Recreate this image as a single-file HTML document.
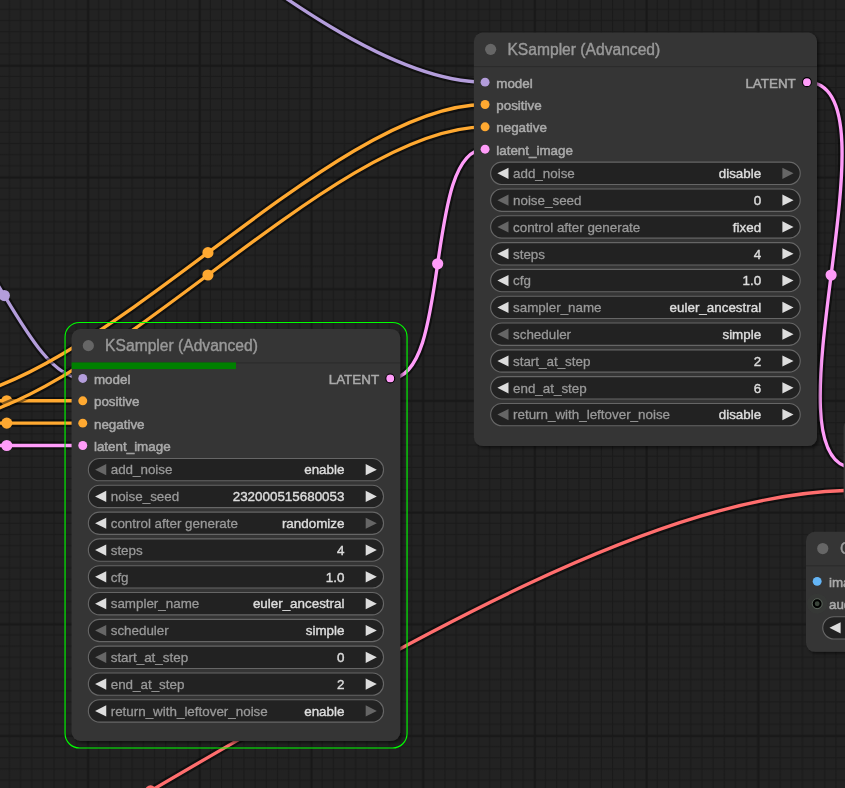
<!DOCTYPE html>
<html><head><meta charset="utf-8"><title>ComfyUI</title>
<style>html,body{margin:0;padding:0;background:#222222;overflow:hidden}svg{display:block;will-change:transform}text{font-family:"Liberation Sans",Arial,sans-serif;stroke-width:0.4px}.sl{stroke-width:0.5px}.wl{stroke-width:0.28px}</style></head><body>
<svg width="845" height="788" viewBox="0 0 845 788">
<defs><linearGradient id="mv" x1="0" x2="1" y1="0" y2="0"><stop offset="0" stop-color="#1a1a1a" stop-opacity="0"/><stop offset="0.5" stop-color="#1a1a1a" stop-opacity="1"/><stop offset="1" stop-color="#1a1a1a" stop-opacity="0"/></linearGradient><linearGradient id="mh" x1="0" x2="0" y1="0" y2="1"><stop offset="0" stop-color="#1a1a1a" stop-opacity="0"/><stop offset="0.5" stop-color="#1a1a1a" stop-opacity="1"/><stop offset="1" stop-color="#1a1a1a" stop-opacity="0"/></linearGradient><linearGradient id="Mv" x1="0" x2="1" y1="0" y2="0"><stop offset="0" stop-color="#181818" stop-opacity="0"/><stop offset="0.3333" stop-color="#181818" stop-opacity="1"/><stop offset="0.6667" stop-color="#181818" stop-opacity="1"/><stop offset="1" stop-color="#181818" stop-opacity="0"/></linearGradient><linearGradient id="Mh" x1="0" x2="0" y1="0" y2="1"><stop offset="0" stop-color="#181818" stop-opacity="0"/><stop offset="0.3333" stop-color="#181818" stop-opacity="1"/><stop offset="0.6667" stop-color="#181818" stop-opacity="1"/><stop offset="1" stop-color="#181818" stop-opacity="0"/></linearGradient><pattern id="grid" x="-30.3" y="-52.59" width="111.7" height="111.7" patternUnits="userSpaceOnUse"><rect width="111.7" height="111.7" fill="#222222"/><rect x="16.2" y="0" width="2.23" height="111.7" fill="url(#mv)"/><rect x="27.37" y="0" width="2.23" height="111.7" fill="url(#mv)"/><rect x="38.54" y="0" width="2.23" height="111.7" fill="url(#mv)"/><rect x="49.71" y="0" width="2.23" height="111.7" fill="url(#mv)"/><rect x="60.88" y="0" width="2.23" height="111.7" fill="url(#mv)"/><rect x="72.05" y="0" width="2.23" height="111.7" fill="url(#mv)"/><rect x="83.22" y="0" width="2.23" height="111.7" fill="url(#mv)"/><rect x="94.39" y="0" width="2.23" height="111.7" fill="url(#mv)"/><rect x="105.56" y="0" width="2.23" height="111.7" fill="url(#mv)"/><rect x="0" y="16.2" width="111.7" height="2.23" fill="url(#mh)"/><rect x="0" y="27.37" width="111.7" height="2.23" fill="url(#mh)"/><rect x="0" y="38.54" width="111.7" height="2.23" fill="url(#mh)"/><rect x="0" y="49.71" width="111.7" height="2.23" fill="url(#mh)"/><rect x="0" y="60.88" width="111.7" height="2.23" fill="url(#mh)"/><rect x="0" y="72.05" width="111.7" height="2.23" fill="url(#mh)"/><rect x="0" y="83.22" width="111.7" height="2.23" fill="url(#mh)"/><rect x="0" y="94.39" width="111.7" height="2.23" fill="url(#mh)"/><rect x="0" y="105.56" width="111.7" height="2.23" fill="url(#mh)"/><rect x="5.03" y="0" width="3.35" height="111.7" fill="url(#Mv)"/><rect x="0" y="5.03" width="111.7" height="3.35" fill="url(#Mh)"/></pattern><filter id="sh" x="-5%" y="-5%" width="112%" height="112%"><feDropShadow dx="2.2" dy="2.2" stdDeviation="1.7" flood-color="#000" flood-opacity="0.5"/></filter></defs>
<rect width="845" height="788" fill="url(#grid)"/>
<g id="links">
<path d="M-74.1 212.7C-17.05 212.7 25.72 378.45 82.77 378.45" fill="none" stroke="#000" stroke-opacity="0.5" stroke-width="7.82"/><path d="M-74.1 212.7C-17.05 212.7 25.72 378.45 82.77 378.45" fill="none" stroke="#B39DDB" stroke-width="3.35"/><circle cx="4.34" cy="295.57" r="5.58" fill="#B39DDB"/>
<path d="M-167.3 -270.8C18.13 -270.8 299.64 82.15 485.07 82.15" fill="none" stroke="#000" stroke-opacity="0.5" stroke-width="7.82"/><path d="M-167.3 -270.8C18.13 -270.8 299.64 82.15 485.07 82.15" fill="none" stroke="#B39DDB" stroke-width="3.35"/><circle cx="158.88" cy="-94.33" r="5.58" fill="#B39DDB"/>
<path d="M-69.2 400.79C-31.21 400.79 44.78 400.79 82.77 400.79" fill="none" stroke="#000" stroke-opacity="0.5" stroke-width="7.82"/><path d="M-69.2 400.79C-31.21 400.79 44.78 400.79 82.77 400.79" fill="none" stroke="#FFA931" stroke-width="3.35"/><circle cx="6.78" cy="400.79" r="5.58" fill="#FFA931"/>
<path d="M-69.2 423.13C-31.21 423.13 44.78 423.13 82.77 423.13" fill="none" stroke="#000" stroke-opacity="0.5" stroke-width="7.82"/><path d="M-69.2 423.13C-31.21 423.13 44.78 423.13 82.77 423.13" fill="none" stroke="#FFA931" stroke-width="3.35"/><circle cx="6.78" cy="423.13" r="5.58" fill="#FFA931"/>
<path d="M-69.2 400.79C87.92 400.79 327.95 104.49 485.07 104.49" fill="none" stroke="#000" stroke-opacity="0.5" stroke-width="7.82"/><path d="M-69.2 400.79C87.92 400.79 327.95 104.49 485.07 104.49" fill="none" stroke="#FFA931" stroke-width="3.35"/><circle cx="207.94" cy="252.64" r="5.58" fill="#FFA931"/>
<path d="M-69.2 423.13C87.92 423.13 327.95 126.83 485.07 126.83" fill="none" stroke="#000" stroke-opacity="0.5" stroke-width="7.82"/><path d="M-69.2 423.13C87.92 423.13 327.95 126.83 485.07 126.83" fill="none" stroke="#FFA931" stroke-width="3.35"/><circle cx="207.94" cy="274.98" r="5.58" fill="#FFA931"/>
<path d="M-69.2 445.47C-31.21 445.47 44.78 445.47 82.77 445.47" fill="none" stroke="#000" stroke-opacity="0.5" stroke-width="7.82"/><path d="M-69.2 445.47C-31.21 445.47 44.78 445.47 82.77 445.47" fill="none" stroke="#FF9CF9" stroke-width="3.35"/><circle cx="6.78" cy="445.47" r="5.58" fill="#FF9CF9"/>
<path d="M390.25 378.45C452.28 378.45 423.04 149.17 485.07 149.17" fill="none" stroke="#000" stroke-opacity="0.5" stroke-width="7.82"/><path d="M390.25 378.45C452.28 378.45 423.04 149.17 485.07 149.17" fill="none" stroke="#FF9CF9" stroke-width="3.35"/><circle cx="437.66" cy="263.81" r="5.58" fill="#FF9CF9"/>
<path d="M806.95 82.15C904.16 82.15 758.08 468 855.3 468" fill="none" stroke="#000" stroke-opacity="0.5" stroke-width="7.82"/><path d="M806.95 82.15C904.16 82.15 758.08 468 855.3 468" fill="none" stroke="#FF9CF9" stroke-width="3.35"/><circle cx="831.12" cy="275.07" r="5.58" fill="#FF9CF9"/>
<path d="M-554.1 1091.4C-171.05 1091.4 472.25 490.4 855.3 490.4" fill="none" stroke="#000" stroke-opacity="0.5" stroke-width="7.82"/><path d="M-554.1 1091.4C-171.05 1091.4 472.25 490.4 855.3 490.4" fill="none" stroke="#FF6E6E" stroke-width="3.35"/><circle cx="150.6" cy="790.9" r="5.58" fill="#FF6E6E"/>
</g>
<g><rect x="473.9" y="32.6" width="343.1" height="413.51" rx="8.94" ry="8.94" fill="#353535" filter="url(#sh)"/><rect x="473.9" y="66.11" width="343.1" height="1" fill="#000" fill-opacity="0.2"/><circle cx="490.65" cy="49.36" r="5.58" fill="#666"/><text x="507.41" y="55" font-size="15.64" fill="#999" stroke="#999">KSampler (Advanced)</text><circle cx="485.07" cy="82.15" r="4.47" fill="#B39DDB"/><text class="sl" x="496.24" y="88" font-size="13.4" fill="#aaa" stroke="#aaa">model</text><circle cx="485.07" cy="104.49" r="4.47" fill="#FFA931"/><text class="sl" x="496.24" y="110" font-size="13.4" fill="#aaa" stroke="#aaa">positive</text><circle cx="485.07" cy="126.83" r="4.47" fill="#FFA931"/><text class="sl" x="496.24" y="132" font-size="13.4" fill="#aaa" stroke="#aaa">negative</text><circle cx="485.07" cy="149.17" r="4.47" fill="#FF9CF9"/><text class="sl" x="496.24" y="155" font-size="13.4" fill="#aaa" stroke="#aaa">latent_image</text><circle cx="806.95" cy="82.15" r="4.47" fill="#FF9CF9" stroke="#000" stroke-width="1.12"/><text class="sl" x="795.78" y="88" font-size="13.4" fill="#aaa" stroke="#aaa" text-anchor="end">LATENT</text><rect x="490.65" y="162.17" width="309.59" height="22.34" rx="11.17" ry="11.17" fill="#222" stroke="#666" stroke-width="1.12"/><path d="M508.53 167.76L497.36 173.34L508.53 178.93Z" fill="#ddd"/><path d="M782.37 167.76L793.54 173.34L782.37 178.93Z" fill="#666"/><text class="wl" x="513" y="178" font-size="13.4" fill="#999" stroke="#999">add_noise</text><text x="761.15" y="178" font-size="13.4" fill="#ddd" stroke="#ddd" text-anchor="end">disable</text><rect x="490.65" y="188.98" width="309.59" height="22.34" rx="11.17" ry="11.17" fill="#222" stroke="#666" stroke-width="1.12"/><path d="M508.53 194.56L497.36 200.15L508.53 205.73Z" fill="#666"/><path d="M782.37 194.56L793.54 200.15L782.37 205.73Z" fill="#ddd"/><text class="wl" x="513" y="205" font-size="13.4" fill="#999" stroke="#999">noise_seed</text><text x="761.15" y="205" font-size="13.4" fill="#ddd" stroke="#ddd" text-anchor="end">0</text><rect x="490.65" y="215.79" width="309.59" height="22.34" rx="11.17" ry="11.17" fill="#222" stroke="#666" stroke-width="1.12"/><path d="M508.53 221.37L497.36 226.96L508.53 232.54Z" fill="#666"/><path d="M782.37 221.37L793.54 226.96L782.37 232.54Z" fill="#ddd"/><text class="wl" x="513" y="232" font-size="13.4" fill="#999" stroke="#999">control after generate</text><text x="761.15" y="232" font-size="13.4" fill="#ddd" stroke="#ddd" text-anchor="end">fixed</text><rect x="490.65" y="242.6" width="309.59" height="22.34" rx="11.17" ry="11.17" fill="#222" stroke="#666" stroke-width="1.12"/><path d="M508.53 248.18L497.36 253.77L508.53 259.35Z" fill="#ddd"/><path d="M782.37 248.18L793.54 253.77L782.37 259.35Z" fill="#ddd"/><text class="wl" x="513" y="259" font-size="13.4" fill="#999" stroke="#999">steps</text><text x="761.15" y="259" font-size="13.4" fill="#ddd" stroke="#ddd" text-anchor="end">4</text><rect x="490.65" y="269.4" width="309.59" height="22.34" rx="11.17" ry="11.17" fill="#222" stroke="#666" stroke-width="1.12"/><path d="M508.53 274.99L497.36 280.57L508.53 286.16Z" fill="#ddd"/><path d="M782.37 274.99L793.54 280.57L782.37 286.16Z" fill="#ddd"/><text class="wl" x="513" y="285" font-size="13.4" fill="#999" stroke="#999">cfg</text><text x="761.15" y="285" font-size="13.4" fill="#ddd" stroke="#ddd" text-anchor="end">1.0</text><rect x="490.65" y="296.21" width="309.59" height="22.34" rx="11.17" ry="11.17" fill="#222" stroke="#666" stroke-width="1.12"/><path d="M508.53 301.8L497.36 307.38L508.53 312.97Z" fill="#ddd"/><path d="M782.37 301.8L793.54 307.38L782.37 312.97Z" fill="#ddd"/><text class="wl" x="513" y="312" font-size="13.4" fill="#999" stroke="#999">sampler_name</text><text x="761.15" y="312" font-size="13.4" fill="#ddd" stroke="#ddd" text-anchor="end">euler_ancestral</text><rect x="490.65" y="323.02" width="309.59" height="22.34" rx="11.17" ry="11.17" fill="#222" stroke="#666" stroke-width="1.12"/><path d="M508.53 328.6L497.36 334.19L508.53 339.77Z" fill="#666"/><path d="M782.37 328.6L793.54 334.19L782.37 339.77Z" fill="#ddd"/><text class="wl" x="513" y="339" font-size="13.4" fill="#999" stroke="#999">scheduler</text><text x="761.15" y="339" font-size="13.4" fill="#ddd" stroke="#ddd" text-anchor="end">simple</text><rect x="490.65" y="349.83" width="309.59" height="22.34" rx="11.17" ry="11.17" fill="#222" stroke="#666" stroke-width="1.12"/><path d="M508.53 355.41L497.36 361L508.53 366.58Z" fill="#ddd"/><path d="M782.37 355.41L793.54 361L782.37 366.58Z" fill="#ddd"/><text class="wl" x="513" y="366" font-size="13.4" fill="#999" stroke="#999">start_at_step</text><text x="761.15" y="366" font-size="13.4" fill="#ddd" stroke="#ddd" text-anchor="end">2</text><rect x="490.65" y="376.64" width="309.59" height="22.34" rx="11.17" ry="11.17" fill="#222" stroke="#666" stroke-width="1.12"/><path d="M508.53 382.22L497.36 387.81L508.53 393.39Z" fill="#ddd"/><path d="M782.37 382.22L793.54 387.81L782.37 393.39Z" fill="#ddd"/><text class="wl" x="513" y="393" font-size="13.4" fill="#999" stroke="#999">end_at_step</text><text x="761.15" y="393" font-size="13.4" fill="#ddd" stroke="#ddd" text-anchor="end">6</text><rect x="490.65" y="403.44" width="309.59" height="22.34" rx="11.17" ry="11.17" fill="#222" stroke="#666" stroke-width="1.12"/><path d="M508.53 409.03L497.36 414.61L508.53 420.2Z" fill="#666"/><path d="M782.37 409.03L793.54 414.61L782.37 420.2Z" fill="#ddd"/><text class="wl" x="513" y="419" font-size="13.4" fill="#999" stroke="#999">return_with_leftover_noise</text><text x="761.15" y="419" font-size="13.4" fill="#ddd" stroke="#ddd" text-anchor="end">disable</text></g>
<g><rect x="843.6" y="418.4" width="234" height="84.91" rx="8.94" ry="8.94" fill="#353535" filter="url(#sh)"/><rect x="843.6" y="451.91" width="234" height="1" fill="#000" fill-opacity="0.2"/><circle cx="860.36" cy="435.15" r="5.58" fill="#666"/><text x="877.11" y="441" font-size="15.64" fill="#999" stroke="#999">VAE Decode</text><circle cx="854.77" cy="467.95" r="4.47" fill="#FF9CF9"/><text class="sl" x="865.94" y="473" font-size="13.4" fill="#aaa" stroke="#aaa">samples</text><circle cx="854.77" cy="490.29" r="4.47" fill="#FF6E6E"/><text class="sl" x="865.94" y="496" font-size="13.4" fill="#aaa" stroke="#aaa">vae</text><circle cx="1067.55" cy="467.95" r="4.47" fill="#64B5F6" stroke="#000" stroke-width="1.12"/><text class="sl" x="1056.38" y="473" font-size="13.4" fill="#aaa" stroke="#aaa" text-anchor="end">IMAGE</text></g>
<g><rect x="806" y="531.8" width="300" height="120.01" rx="8.94" ry="8.94" fill="#353535" filter="url(#sh)"/><rect x="806" y="565.31" width="300" height="1" fill="#000" fill-opacity="0.2"/><circle cx="822.75" cy="548.55" r="5.58" fill="#666"/><text x="840.11" y="554" font-size="15.64" fill="#999" stroke="#999">Create Video</text><circle cx="817.17" cy="581.35" r="4.47" fill="#64B5F6"/><text class="sl" x="828.94" y="587" font-size="13.4" fill="#aaa" stroke="#aaa">images</text><circle cx="817.17" cy="603.69" r="10.05" fill="#4a6a4a" fill-opacity="0.08"/><circle cx="817.17" cy="603.69" r="5" fill="#3a443a" stroke="#626c62" stroke-width="0.8"/><circle cx="817.17" cy="603.69" r="3.4" fill="none" stroke="#000" stroke-width="1.9"/><text class="sl" x="828.94" y="609" font-size="13.4" fill="#aaa" stroke="#aaa">audio</text><circle cx="1095.95" cy="581.35" r="4.47" fill="#888" stroke="#000" stroke-width="1.12"/><text class="sl" x="1084.78" y="587" font-size="13.4" fill="#aaa" stroke="#aaa" text-anchor="end">VIDEO</text><rect x="822.75" y="616.69" width="266.49" height="22.34" rx="11.17" ry="11.17" fill="#222" stroke="#666" stroke-width="1.12"/><path d="M840.63 622.28L829.46 627.86L840.63 633.45Z" fill="#ddd"/><path d="M1071.37 622.28L1082.54 627.86L1071.37 633.45Z" fill="#ddd"/><text class="wl" x="845.1" y="633" font-size="13.4" fill="#999" stroke="#999">fps</text><text x="1050.15" y="633" font-size="13.4" fill="#ddd" stroke="#ddd" text-anchor="end">30.00</text></g>
<g><rect x="71.6" y="328.9" width="328.7" height="412.01" rx="8.94" ry="8.94" fill="#353535" filter="url(#sh)"/><rect x="71.6" y="362.41" width="328.7" height="1" fill="#000" fill-opacity="0.2"/><rect x="71.6" y="362.41" width="164.35" height="6.7" fill="#008000"/><circle cx="88.35" cy="345.65" r="5.58" fill="#666"/><text x="105.11" y="351" font-size="15.64" fill="#999" stroke="#999">KSampler (Advanced)</text><circle cx="82.77" cy="378.45" r="4.47" fill="#B39DDB"/><text class="sl" x="93.94" y="384" font-size="13.4" fill="#aaa" stroke="#aaa">model</text><circle cx="82.77" cy="400.79" r="4.47" fill="#FFA931"/><text class="sl" x="93.94" y="406" font-size="13.4" fill="#aaa" stroke="#aaa">positive</text><circle cx="82.77" cy="423.13" r="4.47" fill="#FFA931"/><text class="sl" x="93.94" y="429" font-size="13.4" fill="#aaa" stroke="#aaa">negative</text><circle cx="82.77" cy="445.47" r="4.47" fill="#FF9CF9"/><text class="sl" x="93.94" y="451" font-size="13.4" fill="#aaa" stroke="#aaa">latent_image</text><circle cx="390.25" cy="378.45" r="4.47" fill="#FF9CF9" stroke="#000" stroke-width="1.12"/><text class="sl" x="379.08" y="384" font-size="13.4" fill="#aaa" stroke="#aaa" text-anchor="end">LATENT</text><rect x="88.35" y="458.47" width="295.19" height="22.34" rx="11.17" ry="11.17" fill="#222" stroke="#666" stroke-width="1.12"/><path d="M106.23 464.06L95.06 469.64L106.23 475.23Z" fill="#666"/><path d="M365.67 464.06L376.84 469.64L365.67 475.23Z" fill="#ddd"/><text class="wl" x="110.69" y="474" font-size="13.4" fill="#999" stroke="#999">add_noise</text><text x="344.45" y="474" font-size="13.4" fill="#ddd" stroke="#ddd" text-anchor="end">enable</text><rect x="88.35" y="485.28" width="295.19" height="22.34" rx="11.17" ry="11.17" fill="#222" stroke="#666" stroke-width="1.12"/><path d="M106.23 490.86L95.06 496.45L106.23 502.03Z" fill="#ddd"/><path d="M365.67 490.86L376.84 496.45L365.67 502.03Z" fill="#ddd"/><text class="wl" x="110.69" y="501" font-size="13.4" fill="#999" stroke="#999">noise_seed</text><text x="344.45" y="501" font-size="13.4" fill="#ddd" stroke="#ddd" text-anchor="end">232000515680053</text><rect x="88.35" y="512.09" width="295.19" height="22.34" rx="11.17" ry="11.17" fill="#222" stroke="#666" stroke-width="1.12"/><path d="M106.23 517.67L95.06 523.26L106.23 528.84Z" fill="#ddd"/><path d="M365.67 517.67L376.84 523.26L365.67 528.84Z" fill="#666"/><text class="wl" x="110.69" y="528" font-size="13.4" fill="#999" stroke="#999">control after generate</text><text x="344.45" y="528" font-size="13.4" fill="#ddd" stroke="#ddd" text-anchor="end">randomize</text><rect x="88.35" y="538.9" width="295.19" height="22.34" rx="11.17" ry="11.17" fill="#222" stroke="#666" stroke-width="1.12"/><path d="M106.23 544.48L95.06 550.07L106.23 555.65Z" fill="#ddd"/><path d="M365.67 544.48L376.84 550.07L365.67 555.65Z" fill="#ddd"/><text class="wl" x="110.69" y="555" font-size="13.4" fill="#999" stroke="#999">steps</text><text x="344.45" y="555" font-size="13.4" fill="#ddd" stroke="#ddd" text-anchor="end">4</text><rect x="88.35" y="565.7" width="295.19" height="22.34" rx="11.17" ry="11.17" fill="#222" stroke="#666" stroke-width="1.12"/><path d="M106.23 571.29L95.06 576.87L106.23 582.46Z" fill="#ddd"/><path d="M365.67 571.29L376.84 576.87L365.67 582.46Z" fill="#ddd"/><text class="wl" x="110.69" y="582" font-size="13.4" fill="#999" stroke="#999">cfg</text><text x="344.45" y="582" font-size="13.4" fill="#ddd" stroke="#ddd" text-anchor="end">1.0</text><rect x="88.35" y="592.51" width="295.19" height="22.34" rx="11.17" ry="11.17" fill="#222" stroke="#666" stroke-width="1.12"/><path d="M106.23 598.1L95.06 603.68L106.23 609.27Z" fill="#ddd"/><path d="M365.67 598.1L376.84 603.68L365.67 609.27Z" fill="#ddd"/><text class="wl" x="110.69" y="608" font-size="13.4" fill="#999" stroke="#999">sampler_name</text><text x="344.45" y="608" font-size="13.4" fill="#ddd" stroke="#ddd" text-anchor="end">euler_ancestral</text><rect x="88.35" y="619.32" width="295.19" height="22.34" rx="11.17" ry="11.17" fill="#222" stroke="#666" stroke-width="1.12"/><path d="M106.23 624.9L95.06 630.49L106.23 636.07Z" fill="#666"/><path d="M365.67 624.9L376.84 630.49L365.67 636.07Z" fill="#ddd"/><text class="wl" x="110.69" y="635" font-size="13.4" fill="#999" stroke="#999">scheduler</text><text x="344.45" y="635" font-size="13.4" fill="#ddd" stroke="#ddd" text-anchor="end">simple</text><rect x="88.35" y="646.13" width="295.19" height="22.34" rx="11.17" ry="11.17" fill="#222" stroke="#666" stroke-width="1.12"/><path d="M106.23 651.71L95.06 657.3L106.23 662.88Z" fill="#666"/><path d="M365.67 651.71L376.84 657.3L365.67 662.88Z" fill="#ddd"/><text class="wl" x="110.69" y="662" font-size="13.4" fill="#999" stroke="#999">start_at_step</text><text x="344.45" y="662" font-size="13.4" fill="#ddd" stroke="#ddd" text-anchor="end">0</text><rect x="88.35" y="672.94" width="295.19" height="22.34" rx="11.17" ry="11.17" fill="#222" stroke="#666" stroke-width="1.12"/><path d="M106.23 678.52L95.06 684.11L106.23 689.69Z" fill="#ddd"/><path d="M365.67 678.52L376.84 684.11L365.67 689.69Z" fill="#ddd"/><text class="wl" x="110.69" y="689" font-size="13.4" fill="#999" stroke="#999">end_at_step</text><text x="344.45" y="689" font-size="13.4" fill="#ddd" stroke="#ddd" text-anchor="end">2</text><rect x="88.35" y="699.74" width="295.19" height="22.34" rx="11.17" ry="11.17" fill="#222" stroke="#666" stroke-width="1.12"/><path d="M106.23 705.33L95.06 710.91L106.23 716.5Z" fill="#ddd"/><path d="M365.67 705.33L376.84 710.91L365.67 716.5Z" fill="#666"/><text class="wl" x="110.69" y="716" font-size="13.4" fill="#999" stroke="#999">return_with_leftover_noise</text><text x="344.45" y="716" font-size="13.4" fill="#ddd" stroke="#ddd" text-anchor="end">enable</text><rect x="65.05" y="322.45" width="342" height="425.55" rx="14.5" ry="14.5" fill="none" stroke="#0f0" stroke-width="1.12"/></g>
</svg>
</body></html>
